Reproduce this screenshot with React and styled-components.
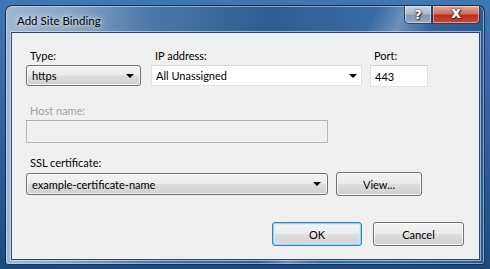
import React from "react";
import styled, { createGlobalStyle } from "styled-components";

const Global = createGlobalStyle`
  html, body { margin: 0; padding: 0; }
  body {
    width: 490px; height: 269px; overflow: hidden;
    background: #1f4f86;
    font-family: Lato, "Noto Sans", sans-serif;
  }
`;

const Page = styled.div`
  width: 490px;
  height: 269px;
  padding: 5px 5px 4px 5px;
  box-sizing: border-box;
  background: linear-gradient(180deg, #3f77b4 0%, #2a5e98 60%, #1c4a7e 100%);
`;

const Window = styled.div`
  height: 100%;
  display: flex;
  flex-direction: column;
  border: 1px solid rgba(20, 40, 70, 0.9);
  border-radius: 7px 7px 3px 3px;
  box-shadow: inset 0 0 0 1px rgba(200, 225, 250, 0.55);
  background:
    linear-gradient(115deg, transparent 0%, transparent 62%, rgba(255,255,255,0.28) 67%, transparent 73%),
    linear-gradient(90deg, #9fb7d1 0%, #86a3c5 14%, #4a78a8 30%, #2c5c91 55%, #386ba3 75%, #2a5a90 100%);
  box-sizing: border-box;
  padding: 0 4px 4px 5px;
`;

const TitleBar = styled.div`
  height: 26px;
  display: flex;
  align-items: flex-start;
  justify-content: space-between;
`;

const Title = styled.div`
  padding: 8px 0 0 6px;
  font-size: 11.5px;
  color: #000;
  text-shadow: 0 0 8px rgba(255,255,255,0.9), 0 0 4px rgba(255,255,255,0.8);
`;

const CaptionButtons = styled.div`
  display: flex;
`;

const CaptionButton = styled.div`
  width: ${(p) => p.$w}px;
  height: 18px;
  box-sizing: border-box;
  display: flex;
  align-items: center;
  justify-content: center;
  color: #fff;
  font-family: "DejaVu Sans", sans-serif;
  font-weight: bold;
  font-size: ${(p) => (p.$close ? 15 : 13)}px;
  line-height: 1;
  padding-bottom: ${(p) => (p.$close ? 2 : 0)}px;
  text-shadow: 0 0 1px #222, 0 0 2px #333, 1px 1px 1px #333;
  border: 1px solid rgba(30, 45, 70, 0.85);
  border-top: none;
  border-radius: ${(p) => (p.$close ? "0 0 5px 0" : "0 0 0 5px")};
  box-shadow: inset 0 0 0 1px rgba(255,255,255,0.45);
  background: ${(p) =>
    p.$close
      ? "linear-gradient(180deg, #e8a493 0%, #d26f5e 45%, #b8321f 55%, #c9483a 100%)"
      : "linear-gradient(180deg, #c7d3e0 0%, #a9b9cb 45%, #8299b3 55%, #93a9c2 100%)"};
`;

const Client = styled.div`
  flex: 1;
  background: #f0f0f0;
  border: 1px solid #2d4867;
  box-shadow: 0 0 0 1px rgba(220, 235, 250, 0.6);
  padding: 15px 0 0 14px;
  display: flex;
  flex-direction: column;
`;

const TopRow = styled.div`
  display: grid;
  grid-template-columns: 115px 211px 58px;
  column-gap: 10px;
  & > :nth-child(3) { margin-left: -2px; }
`;

const Field = styled.div`
  display: flex;
  flex-direction: column;
`;

const Label = styled.div`
  font-size: 11px;
  line-height: 15px;
  height: 15px;
  padding-left: 4px;
  margin-bottom: 2px;
  color: ${(p) => (p.$disabled ? "#a0a0a0" : "#000")};
`;

const Arrow = styled.span`
  width: 0;
  height: 0;
  border-left: 4px solid transparent;
  border-right: 4px solid transparent;
  border-top: 4px solid #000;
  margin-left: auto;
  margin-right: ${(p) => p.$mr || 6}px;
`;

const DropDown = styled.div`
  width: ${(p) => p.$w}px;
  height: ${(p) => p.$h || 21}px;
  box-sizing: border-box;
  display: flex;
  align-items: center;
  padding-left: 5px;
  font-size: 11px;
  color: #000;
  border: 1px solid #707070;
  border-radius: 3px;
  background: linear-gradient(180deg, #f3f3f3 0%, #ebebeb 48%, #dddddd 52%, #d0d0d0 100%);
  box-shadow: inset 0 0 0 1px rgba(255,255,255,0.7);
`;

const Combo = styled.div`
  width: ${(p) => p.$w}px;
  height: 21px;
  box-sizing: border-box;
  display: flex;
  align-items: center;
  padding-left: 4px;
  font-size: 11px;
  background: #fff;
  border: 1px solid #dfe3e8;
  border-top-color: #d4d8dd;
`;

const TextBox = styled.div`
  width: ${(p) => p.$w}px;
  height: ${(p) => p.$h || 22}px;
  box-sizing: border-box;
  display: flex;
  align-items: center;
  padding-left: 4px;
  font-size: 11px;
  background: ${(p) => (p.$disabled ? "#f0f0f0" : "#fff")};
  border: 1px solid ${(p) => (p.$disabled ? "#b5b8bb" : "#dcdfe3")};
  border-top-color: ${(p) => (p.$disabled ? "#aaaeb1" : "#c9ccd0")};
`;

const HostField = styled(Field)`
  margin-top: 16px;
`;

const SslField = styled(Field)`
  margin-top: 12px;
`;

const SslRow = styled.div`
  display: flex;
  align-items: center;
  gap: 8px;
`;

const Button = styled.div`
  width: ${(p) => p.$w}px;
  height: 24px;
  box-sizing: border-box;
  display: flex;
  align-items: center;
  justify-content: center;
  font-size: 11px;
  color: #000;
  border: 1px solid #707070;
  border-radius: 3px;
  background: linear-gradient(180deg, #f2f2f2 0%, #ebebeb 48%, #dddddd 52%, #cfcfcf 100%);
  box-shadow: inset 0 0 0 1px rgba(255,255,255,0.8);
`;

const OkButton = styled(Button)`
  border-color: #3c7fb1;
  background: linear-gradient(180deg, #f4f4f4 0%, #ececec 48%, #dfdfdf 52%, #d2d2d2 100%);
  box-shadow: inset 0 0 0 1px #8fd7f5, inset 0 0 0 2px rgba(200, 240, 255, 0.7);
`;

const Footer = styled.div`
  margin-top: 26px;
  display: flex;
  gap: 11px;
  padding-left: 246px;
`;

export default function App() {
  return (
    <>
      <Global />
      <Page>
        <Window>
          <TitleBar>
            <Title>Add Site Binding</Title>
            <CaptionButtons>
              <CaptionButton $w={28}>?</CaptionButton>
              <CaptionButton $w={48} $close>x</CaptionButton>
            </CaptionButtons>
          </TitleBar>
          <Client>
            <TopRow>
              <Field>
                <Label>Type:</Label>
                <DropDown $w={115}>
                  https
                  <Arrow />
                </DropDown>
              </Field>
              <Field>
                <Label>IP address:</Label>
                <Combo $w={211}>
                  All Unassigned
                  <Arrow $mr={4} />
                </Combo>
              </Field>
              <Field>
                <Label>Port:</Label>
                <TextBox $w={58}>443</TextBox>
              </Field>
            </TopRow>
            <HostField>
              <Label $disabled>Host name:</Label>
              <TextBox $w={302} $h={23} $disabled />
            </HostField>
            <SslField>
              <Label>SSL certificate:</Label>
              <SslRow>
                <DropDown $w={302} $h={22}>
                  example-certificate-name
                  <Arrow />
                </DropDown>
                <Button $w={86}>View...</Button>
              </SslRow>
            </SslField>
            <Footer>
              <OkButton $w={90}>OK</OkButton>
              <Button $w={91}>Cancel</Button>
            </Footer>
          </Client>
        </Window>
      </Page>
    </>
  );
}
